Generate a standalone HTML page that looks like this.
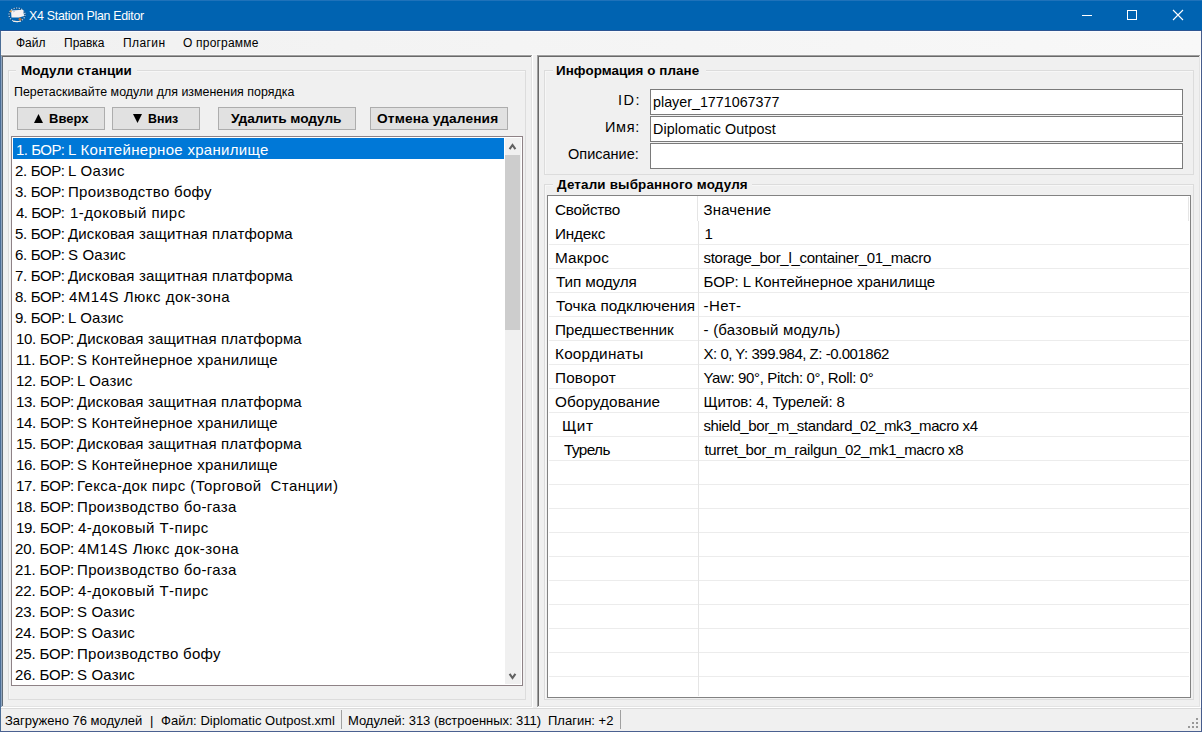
<!DOCTYPE html>
<html><head><meta charset="utf-8"><style>
html,body{margin:0;padding:0}
body{width:1202px;height:732px;overflow:hidden;position:relative;background:#f0f0f0;font-family:"Liberation Sans",sans-serif;color:#000}
body>div{position:absolute}
.t{white-space:pre;line-height:1;color:#000}
.btn{background:#e1e1e1;border:1px solid #adadad;box-sizing:border-box;font-weight:bold;font-size:13.7px;text-align:center;line-height:21px;white-space:pre}
.sp{display:inline-block;width:14px}
</style></head><body>
<div style="left:0px;top:0px;width:1202px;height:31px;background:#0063b1"></div>
<div style="left:0px;top:0px;width:1202px;height:1px;background:#1f72ba"></div>
<div style="left:0px;top:30px;width:1202px;height:1px;background:#2c5592"></div>
<svg style="position:absolute;left:8px;top:7px" width="18" height="16" viewBox="0 0 18 16"><ellipse cx="9" cy="7.8" rx="8" ry="6.8" fill="none" stroke="#fff" stroke-width="1.1" stroke-dasharray="1.2 1.4" opacity="0.8"/><ellipse cx="9" cy="7.8" rx="8" ry="6.8" fill="none" stroke="#4a3030" stroke-width="1" stroke-dasharray="1 1.6" stroke-dashoffset="1.3" opacity="0.7"/><path d="M3 3.5L15 2.8L16.2 9L11 10.5L3.5 10.5Z" fill="#f6f2f2"/><path d="M5 14.2Q9 15.2 13 14" stroke="#f4eee8" stroke-width="1.3" fill="none"/><circle cx="2.8" cy="4.3" r="1.1" fill="#e0a050"/><circle cx="12" cy="12.2" r="1.4" fill="#b87038"/><path d="M5 5L7 4" stroke="#b0b8c8" stroke-width="0.8"/></svg>
<div class="t" style="left:29px;top:9.5px;font-size:12.4px;letter-spacing:-0.286px;color:#fff">X4 Station Plan Editor</div>
<div style="left:1082px;top:15px;width:10px;height:1px;background:#fff"></div>
<div style="left:1127px;top:10px;width:10px;height:10px;border:1px solid #fff;box-sizing:border-box"></div>
<svg style="position:absolute;left:1172px;top:9px" width="12" height="12" viewBox="0 0 12 12"><path d="M1 1L11 11M11 1L1 11" stroke="#fff" stroke-width="1.1"/></svg>
<div style="left:0px;top:31px;width:1px;height:701px;background:#4b6d96"></div>
<div style="left:1201px;top:31px;width:1px;height:701px;background:#465c8c"></div>
<div style="left:0px;top:731px;width:1202px;height:1px;background:#4a6090"></div>
<div style="left:1px;top:31px;width:1200px;height:24px;background:linear-gradient(to right,#f1f1f1,#f8f8f8)"></div>
<div style="left:1px;top:31px;width:1200px;height:1px;background:#fafcff"></div>
<div style="left:1px;top:54px;width:1200px;height:1px;background:#f8f8f8"></div>
<div class="t" style="left:16px;top:36.84px;font-size:12px;letter-spacing:0.0px">Файл</div>
<div class="t" style="left:64px;top:36.84px;font-size:12px;letter-spacing:0.0px">Правка</div>
<div class="t" style="left:123px;top:36.84px;font-size:12px;letter-spacing:0.4px">Плагин</div>
<div class="t" style="left:183px;top:36.84px;font-size:12px;letter-spacing:0.2px">О программе</div>
<div style="left:1px;top:55px;width:532px;height:1px;background:#a0a0a0"></div>
<div style="left:1px;top:55px;width:1px;height:653px;background:#a0a0a0"></div>
<div style="left:2px;top:56px;width:530px;height:1px;background:#696969"></div>
<div style="left:2px;top:56px;width:1px;height:651px;background:#696969"></div>
<div style="left:1px;top:707px;width:532px;height:1px;background:#ffffff"></div>
<div style="left:532px;top:55px;width:1px;height:653px;background:#ffffff"></div>
<div style="left:2px;top:706px;width:530px;height:1px;background:#e3e3e3"></div>
<div style="left:531px;top:56px;width:1px;height:651px;background:#e3e3e3"></div>
<div style="left:1px;top:56px;width:1px;height:651px;background:#8ea5c0"></div>
<div style="left:2px;top:57px;width:1px;height:649px;background:#5f6b76"></div>
<div style="left:537px;top:55px;width:664px;height:1px;background:#a0a0a0"></div>
<div style="left:537px;top:55px;width:1px;height:653px;background:#a0a0a0"></div>
<div style="left:538px;top:56px;width:662px;height:1px;background:#696969"></div>
<div style="left:538px;top:56px;width:1px;height:651px;background:#696969"></div>
<div style="left:537px;top:707px;width:664px;height:1px;background:#ffffff"></div>
<div style="left:1200px;top:55px;width:1px;height:653px;background:#ffffff"></div>
<div style="left:538px;top:706px;width:662px;height:1px;background:#e3e3e3"></div>
<div style="left:1199px;top:56px;width:1px;height:651px;background:#e3e3e3"></div>
<div style="left:8px;top:70px;width:518px;height:1px;background:#dcdcdc"></div>
<div style="left:8px;top:70px;width:1px;height:630px;background:#dcdcdc"></div>
<div style="left:9px;top:71px;width:516px;height:1px;background:#f7f7f7"></div>
<div style="left:9px;top:71px;width:1px;height:628px;background:#f7f7f7"></div>
<div style="left:8px;top:699px;width:518px;height:1px;background:#dcdcdc"></div>
<div style="left:525px;top:70px;width:1px;height:630px;background:#dcdcdc"></div>
<div style="left:16px;top:64px;width:121px;height:12px;background:#f0f0f0"></div>
<div class="t" style="left:21px;top:64.16px;font-size:13.4px;letter-spacing:0.077px;font-weight:bold">Модули станции</div>
<div class="t" style="left:14px;top:85.5px;font-size:12.4px;letter-spacing:0.024px">Перетаскивайте модули для изменения порядка</div>
<div class="btn" style="left:17px;top:107px;width:88px;height:23px"></div>
<div class="btn" style="left:112px;top:107px;width:88px;height:23px"></div>
<div class="btn" style="left:218px;top:107px;width:138px;height:23px"></div>
<div class="btn" style="left:370px;top:107px;width:138px;height:23px"></div>
<svg style="position:absolute;left:34px;top:114px" width="9" height="9"><path d="M4.5 0L9 9H0Z" fill="#000"/></svg>
<svg style="position:absolute;left:133px;top:114px" width="9" height="9"><path d="M0 0H9L4.5 9Z" fill="#000"/></svg>
<div class="t" style="left:49px;top:112.0px;font-size:13px;letter-spacing:0.0px;font-weight:bold">Вверх</div>
<div class="t" style="left:148px;top:112.5px;font-size:12.4px;letter-spacing:0.0px;font-weight:bold">Вниз</div>
<div class="t" style="left:231px;top:112.2px;font-size:13.7px;letter-spacing:-0.077px;font-weight:bold">Удалить модуль</div>
<div class="t" style="left:377px;top:112.2px;font-size:13.7px;letter-spacing:0.143px;font-weight:bold">Отмена удаления</div>
<div style="left:11px;top:136px;width:512px;height:550px;border:1px solid #8e8286;box-sizing:border-box;background:#fff"></div>
<div style="left:13px;top:138px;width:491px;height:21px;background:#0078d7"></div>
<div class="t" style="left:16px;top:142.3px;font-size:15px;letter-spacing:-0.5px;color:#fff">1. БОР:</div>
<div class="t" style="left:68px;top:142.3px;font-size:15px;letter-spacing:0.304px;color:#fff">L Контейнерное хранилище</div>
<div class="t" style="left:15px;top:163.3px;font-size:15px;letter-spacing:-0.333px">2. БОР:</div>
<div class="t" style="left:68px;top:163.3px;font-size:15px;letter-spacing:0.333px">L Оазис</div>
<div class="t" style="left:15px;top:184.3px;font-size:15px;letter-spacing:-0.333px">3. БОР:</div>
<div class="t" style="left:68px;top:184.3px;font-size:15px;letter-spacing:0.312px">Производство бофу</div>
<div class="t" style="left:16px;top:205.3px;font-size:15px;letter-spacing:-0.5px">4. БОР:</div>
<div class="t" style="left:70px;top:205.3px;font-size:15px;letter-spacing:0.462px">1-доковый пирс</div>
<div class="t" style="left:15px;top:226.3px;font-size:15px;letter-spacing:-0.333px">5. БОР:</div>
<div class="t" style="left:68px;top:226.3px;font-size:15px;letter-spacing:0.154px">Дисковая защитная платформа</div>
<div class="t" style="left:15px;top:247.3px;font-size:15px;letter-spacing:-0.333px">6. БОР:</div>
<div class="t" style="left:68px;top:247.3px;font-size:15px;letter-spacing:0.167px">S Оазис</div>
<div class="t" style="left:15px;top:268.3px;font-size:15px;letter-spacing:-0.333px">7. БОР:</div>
<div class="t" style="left:68px;top:268.3px;font-size:15px;letter-spacing:0.154px">Дисковая защитная платформа</div>
<div class="t" style="left:15px;top:289.3px;font-size:15px;letter-spacing:-0.333px">8. БОР:</div>
<div class="t" style="left:69px;top:289.3px;font-size:15px;letter-spacing:0.5px">4M14S Люкс док-зона</div>
<div class="t" style="left:15px;top:310.3px;font-size:15px;letter-spacing:-0.333px">9. БОР:</div>
<div class="t" style="left:68px;top:310.3px;font-size:15px;letter-spacing:0.167px">L Оазис</div>
<div class="t" style="left:16px;top:331.3px;font-size:15px;letter-spacing:-0.286px">10. БОР:</div>
<div class="t" style="left:77px;top:331.3px;font-size:15px;letter-spacing:0.154px">Дисковая защитная платформа</div>
<div class="t" style="left:16px;top:352.3px;font-size:15px;letter-spacing:-0.143px">11. БОР:</div>
<div class="t" style="left:77px;top:352.3px;font-size:15px;letter-spacing:0.217px">S Контейнерное хранилище</div>
<div class="t" style="left:16px;top:373.3px;font-size:15px;letter-spacing:-0.286px">12. БОР:</div>
<div class="t" style="left:77px;top:373.3px;font-size:15px;letter-spacing:0.167px">L Оазис</div>
<div class="t" style="left:16px;top:394.3px;font-size:15px;letter-spacing:-0.286px">13. БОР:</div>
<div class="t" style="left:77px;top:394.3px;font-size:15px;letter-spacing:0.154px">Дисковая защитная платформа</div>
<div class="t" style="left:16px;top:415.3px;font-size:15px;letter-spacing:-0.286px">14. БОР:</div>
<div class="t" style="left:77px;top:415.3px;font-size:15px;letter-spacing:0.217px">S Контейнерное хранилище</div>
<div class="t" style="left:16px;top:436.3px;font-size:15px;letter-spacing:-0.286px">15. БОР:</div>
<div class="t" style="left:77px;top:436.3px;font-size:15px;letter-spacing:0.154px">Дисковая защитная платформа</div>
<div class="t" style="left:16px;top:457.3px;font-size:15px;letter-spacing:-0.286px">16. БОР:</div>
<div class="t" style="left:77px;top:457.3px;font-size:15px;letter-spacing:0.217px">S Контейнерное хранилище</div>
<div class="t" style="left:16px;top:478.3px;font-size:15px;letter-spacing:-0.286px">17. БОР:</div>
<div class="t" style="left:77px;top:478.3px;font-size:15px;letter-spacing:0.394px">Гекса-док пирс (Торговой  Станции)</div>
<div class="t" style="left:16px;top:499.3px;font-size:15px;letter-spacing:-0.286px">18. БОР:</div>
<div class="t" style="left:77px;top:499.3px;font-size:15px;letter-spacing:0.368px">Производство бо-газа</div>
<div class="t" style="left:16px;top:520.3px;font-size:15px;letter-spacing:-0.286px">19. БОР:</div>
<div class="t" style="left:78px;top:520.3px;font-size:15px;letter-spacing:0.467px">4-доковый Т-пирс</div>
<div class="t" style="left:15px;top:541.3px;font-size:15px;letter-spacing:-0.143px">20. БОР:</div>
<div class="t" style="left:78px;top:541.3px;font-size:15px;letter-spacing:0.5px">4M14S Люкс док-зона</div>
<div class="t" style="left:15px;top:562.3px;font-size:15px;letter-spacing:-0.143px">21. БОР:</div>
<div class="t" style="left:77px;top:562.3px;font-size:15px;letter-spacing:0.368px">Производство бо-газа</div>
<div class="t" style="left:15px;top:583.3px;font-size:15px;letter-spacing:-0.143px">22. БОР:</div>
<div class="t" style="left:78px;top:583.3px;font-size:15px;letter-spacing:0.467px">4-доковый Т-пирс</div>
<div class="t" style="left:15px;top:604.3px;font-size:15px;letter-spacing:-0.143px">23. БОР:</div>
<div class="t" style="left:77px;top:604.3px;font-size:15px;letter-spacing:0.167px">S Оазис</div>
<div class="t" style="left:15px;top:625.3px;font-size:15px;letter-spacing:-0.143px">24. БОР:</div>
<div class="t" style="left:77px;top:625.3px;font-size:15px;letter-spacing:0.167px">S Оазис</div>
<div class="t" style="left:15px;top:646.3px;font-size:15px;letter-spacing:-0.143px">25. БОР:</div>
<div class="t" style="left:77px;top:646.3px;font-size:15px;letter-spacing:0.312px">Производство бофу</div>
<div class="t" style="left:15px;top:667.3px;font-size:15px;letter-spacing:-0.143px">26. БОР:</div>
<div class="t" style="left:77px;top:667.3px;font-size:15px;letter-spacing:0.167px">S Оазис</div>
<div style="left:505px;top:138px;width:16px;height:546px;background:#f0f0f0"></div>
<div style="left:505px;top:155px;width:15px;height:175px;background:#cdcdcd"></div>
<svg style="position:absolute;left:505px;top:138px" width="16" height="17"><path d="M4.6 11.2L7.5 7L10.4 11.2" fill="none" stroke="#606060" stroke-width="2.1"/></svg>
<svg style="position:absolute;left:505px;top:667px" width="16" height="17"><path d="M4.6 6.8L7.5 11L10.4 6.8" fill="none" stroke="#606060" stroke-width="2.1"/></svg>
<div style="left:544px;top:70px;width:650px;height:1px;background:#dcdcdc"></div>
<div style="left:544px;top:70px;width:1px;height:105px;background:#dcdcdc"></div>
<div style="left:545px;top:71px;width:648px;height:1px;background:#f7f7f7"></div>
<div style="left:545px;top:71px;width:1px;height:103px;background:#f7f7f7"></div>
<div style="left:544px;top:174px;width:650px;height:1px;background:#dcdcdc"></div>
<div style="left:1193px;top:70px;width:1px;height:105px;background:#dcdcdc"></div>
<div style="left:553px;top:64px;width:153px;height:12px;background:#f0f0f0"></div>
<div class="t" style="left:556px;top:64.16px;font-size:13.4px;letter-spacing:0.059px;font-weight:bold">Информация о плане</div>
<div class="t" style="left:618px;top:93.23px;font-size:14.5px;letter-spacing:1.5px">ID:</div>
<div style="left:650px;top:89px;width:533px;height:26px;border:1px solid #7a7a7a;box-sizing:border-box;background:#fff"></div>
<div class="t" style="left:653px;top:94.6px;font-size:14.3px;letter-spacing:0.0px">player_1771067377</div>
<div class="t" style="left:605px;top:120.23px;font-size:14.5px;letter-spacing:0.667px">Имя:</div>
<div style="left:650px;top:116px;width:533px;height:26px;border:1px solid #7a7a7a;box-sizing:border-box;background:#fff"></div>
<div class="t" style="left:653px;top:121.6px;font-size:14.3px;letter-spacing:0.118px">Diplomatic Outpost</div>
<div class="t" style="left:568px;top:147.23px;font-size:14.5px;letter-spacing:0.0px">Описание:</div>
<div style="left:650px;top:143px;width:533px;height:26px;border:1px solid #7a7a7a;box-sizing:border-box;background:#fff"></div>
<div style="left:544px;top:184px;width:650px;height:1px;background:#dcdcdc"></div>
<div style="left:544px;top:184px;width:1px;height:516px;background:#dcdcdc"></div>
<div style="left:545px;top:185px;width:648px;height:1px;background:#f7f7f7"></div>
<div style="left:545px;top:185px;width:1px;height:514px;background:#f7f7f7"></div>
<div style="left:544px;top:699px;width:650px;height:1px;background:#dcdcdc"></div>
<div style="left:1193px;top:184px;width:1px;height:516px;background:#dcdcdc"></div>
<div style="left:553px;top:178px;width:199px;height:12px;background:#f0f0f0"></div>
<div class="t" style="left:557px;top:178.16px;font-size:13.4px;letter-spacing:0.174px;font-weight:bold">Детали выбранного модуля</div>
<div style="left:547px;top:195px;width:644px;height:503px;border:1px solid #828282;box-sizing:border-box;background:#fff"></div>
<div style="left:549px;top:244px;width:640px;height:1px;background:#ececec"></div>
<div style="left:549px;top:268px;width:640px;height:1px;background:#ececec"></div>
<div style="left:549px;top:292px;width:640px;height:1px;background:#ececec"></div>
<div style="left:549px;top:316px;width:640px;height:1px;background:#ececec"></div>
<div style="left:549px;top:340px;width:640px;height:1px;background:#ececec"></div>
<div style="left:549px;top:364px;width:640px;height:1px;background:#ececec"></div>
<div style="left:549px;top:388px;width:640px;height:1px;background:#ececec"></div>
<div style="left:549px;top:412px;width:640px;height:1px;background:#ececec"></div>
<div style="left:549px;top:436px;width:640px;height:1px;background:#ececec"></div>
<div style="left:549px;top:460px;width:640px;height:1px;background:#ececec"></div>
<div style="left:549px;top:484px;width:640px;height:1px;background:#ececec"></div>
<div style="left:549px;top:508px;width:640px;height:1px;background:#ececec"></div>
<div style="left:549px;top:532px;width:640px;height:1px;background:#ececec"></div>
<div style="left:549px;top:556px;width:640px;height:1px;background:#ececec"></div>
<div style="left:549px;top:580px;width:640px;height:1px;background:#ececec"></div>
<div style="left:549px;top:604px;width:640px;height:1px;background:#ececec"></div>
<div style="left:549px;top:628px;width:640px;height:1px;background:#ececec"></div>
<div style="left:549px;top:652px;width:640px;height:1px;background:#ececec"></div>
<div style="left:549px;top:676px;width:640px;height:1px;background:#ececec"></div>
<div style="left:697px;top:196px;width:1px;height:25px;background:#e5e5e5"></div>
<div style="left:698px;top:221px;width:1px;height:475px;background:#e5e5e5"></div>
<div style="left:1188px;top:197px;width:1px;height:24px;background:#e5e5e5"></div>
<div class="t" style="left:555px;top:201.65px;font-size:15.3px;letter-spacing:-0.286px">Свойство</div>
<div class="t" style="left:703.5px;top:201.9px;font-size:15px;letter-spacing:0.143px">Значение</div>
<div class="t" style="left:555px;top:225.65px;font-size:15.3px;letter-spacing:-0.2px">Индекс</div>
<div class="t" style="left:704.5px;top:225.9px;font-size:15px;letter-spacing:0.0px">1</div>
<div class="t" style="left:555px;top:249.65px;font-size:15.3px;letter-spacing:0.2px">Макрос</div>
<div class="t" style="left:703.5px;top:249.9px;font-size:15px;letter-spacing:-0.29px">storage_bor_l_container_01_macro</div>
<div class="t" style="left:556px;top:273.65px;font-size:15.3px;letter-spacing:-0.111px">Тип модуля</div>
<div class="t" style="left:703.5px;top:273.9px;font-size:15px;letter-spacing:-0.036px">БОР: L Контейнерное хранилище</div>
<div class="t" style="left:556px;top:297.65px;font-size:15.3px;letter-spacing:0.062px">Точка подключения</div>
<div class="t" style="left:703.5px;top:297.9px;font-size:15px;letter-spacing:0.5px">-Нет-</div>
<div class="t" style="left:555px;top:321.65px;font-size:15.3px;letter-spacing:-0.154px">Предшественник</div>
<div class="t" style="left:703.5px;top:321.9px;font-size:15px;letter-spacing:0.235px">- (базовый модуль)</div>
<div class="t" style="left:555px;top:345.65px;font-size:15.3px;letter-spacing:0.222px">Координаты</div>
<div class="t" style="left:703.5px;top:345.9px;font-size:15px;letter-spacing:-0.483px">X: 0, Y: 399.984, Z: -0.001862</div>
<div class="t" style="left:555px;top:369.65px;font-size:15.3px;letter-spacing:0.167px">Поворот</div>
<div class="t" style="left:703.5px;top:369.9px;font-size:15px;letter-spacing:-0.357px">Yaw: 90°, Pitch: 0°, Roll: 0°</div>
<div class="t" style="left:555px;top:393.65px;font-size:15.3px;letter-spacing:0.091px">Оборудование</div>
<div class="t" style="left:703.5px;top:393.9px;font-size:15px;letter-spacing:-0.158px">Щитов: 4, Турелей: 8</div>
<div class="t" style="left:562px;top:417.65px;font-size:15.3px;letter-spacing:0.5px">Щит</div>
<div class="t" style="left:703.5px;top:417.9px;font-size:15px;letter-spacing:-0.389px">shield_bor_m_standard_02_mk3_macro x4</div>
<div class="t" style="left:564px;top:441.65px;font-size:15.3px;letter-spacing:-0.6px">Турель</div>
<div class="t" style="left:704.5px;top:441.9px;font-size:15px;letter-spacing:-0.343px">turret_bor_m_railgun_02_mk1_macro x8</div>
<div style="left:1px;top:708px;width:1200px;height:1px;background:#dadada"></div>
<div class="t" style="left:5px;top:714.0px;font-size:13px;letter-spacing:0.0px">Загружено 76 модулей</div>
<div class="t" style="left:150px;top:714.0px;font-size:13px;letter-spacing:0.0px">|</div>
<div class="t" style="left:161px;top:714.0px;font-size:13px;letter-spacing:0.037px">Файл: Diplomatic Outpost.xml</div>
<div style="left:341px;top:710px;width:1px;height:19px;background:#a0a0a0"></div>
<div class="t" style="left:348px;top:714.0px;font-size:13px;letter-spacing:-0.034px">Модулей: 313 (встроенных: 311)</div>
<div class="t" style="left:548px;top:714.0px;font-size:13px;letter-spacing:0.0px">Плагин: +2</div>
<div style="left:620px;top:710px;width:1px;height:19px;background:#a0a0a0"></div>
<div style="left:1196px;top:718px;width:2px;height:2px;background:#999"></div>
<div style="left:1192px;top:722px;width:2px;height:2px;background:#999"></div>
<div style="left:1196px;top:722px;width:2px;height:2px;background:#999"></div>
<div style="left:1188px;top:726px;width:2px;height:2px;background:#999"></div>
<div style="left:1192px;top:726px;width:2px;height:2px;background:#999"></div>
<div style="left:1196px;top:726px;width:2px;height:2px;background:#999"></div>
</body></html>
